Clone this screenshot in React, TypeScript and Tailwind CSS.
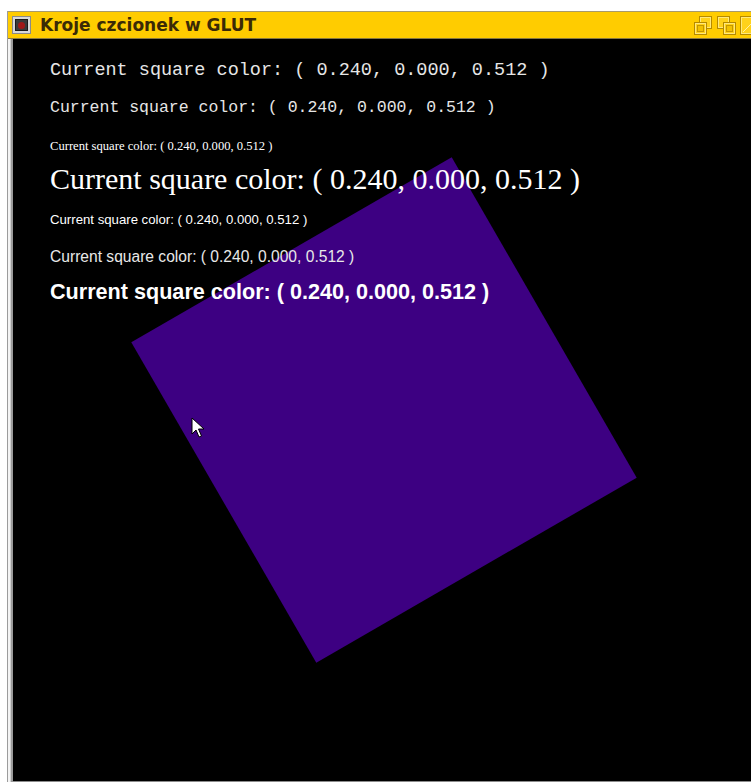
import React from "react";

const LINE = "Current square color: ( 0.240, 0.000, 0.512 )";

// little window-menu icon at the left end of the title bar
function MenuIcon() {
  return (
    <div className="w-[19px] h-[18px] bg-[#d8d8d8] border border-[#8a8a8a] flex items-center justify-center">
      <div className="w-[13px] h-[12px] bg-[#3a3a3a] border border-[#1a1a1a] flex items-center justify-center">
        <div className="w-[7px] h-[7px] rounded-full bg-[#a01818]" />
      </div>
    </div>
  );
}

function TitleButtons() {
  return (
    <div className="flex items-center gap-[4px] h-full mr-[-8px]">
      <svg width="19" height="19" viewBox="0 0 19 19">
        <rect x="5.5" y="0.5" width="12" height="12" fill="#ffd21a" stroke="#b48a00" />
        <rect x="6.5" y="1.5" width="10" height="10" fill="none" stroke="#ffe87a" />
        <rect x="0.5" y="6.5" width="12" height="12" fill="#ffd21a" stroke="#b48a00" />
        <rect x="1.5" y="7.5" width="10" height="10" fill="none" stroke="#ffe87a" />
        <rect x="3.5" y="9.5" width="6" height="6" fill="#f2c200" stroke="#c49600" />
      </svg>
      <svg width="19" height="19" viewBox="0 0 19 19">
        <rect x="0.5" y="0.5" width="12" height="12" fill="#ffd21a" stroke="#b48a00" />
        <rect x="1.5" y="1.5" width="10" height="10" fill="none" stroke="#ffe87a" />
        <rect x="6.5" y="6.5" width="12" height="12" fill="#ffd21a" stroke="#b48a00" />
        <rect x="7.5" y="7.5" width="10" height="10" fill="none" stroke="#ffe87a" />
        <rect x="9.5" y="9.5" width="6" height="6" fill="#f2c200" stroke="#c49600" />
      </svg>
      <svg width="19" height="19" viewBox="0 0 19 19">
        <rect x="0.5" y="0.5" width="18" height="18" fill="#ffd21a" stroke="#b48a00" />
        <rect x="1.5" y="1.5" width="16" height="16" fill="none" stroke="#ffe87a" />
        <path d="M3 16 L16 3" stroke="#fff0a0" strokeWidth="1" />
      </svg>
    </div>
  );
}

function Cursor() {
  return (
    <svg width="14" height="22" viewBox="0 0 14 22" className="absolute left-[178px] top-[378px]">
      <path
        d="M1 1 L1 17 L5 13 L8 20 L10.5 19 L7.5 12 L13 12 Z"
        fill="#ffffff"
        stroke="#000000"
        strokeWidth="1"
        strokeLinejoin="round"
      />
    </svg>
  );
}

export default function App() {
  return (
    <div className="w-[751px] h-[782px] bg-white overflow-hidden pt-[11px] pl-[7px]">
      <div className="h-full flex flex-col border-l border-[#9c9c9c]">
        {/* title bar */}
        <div className="h-[28px] shrink-0 bg-[#ffcc00] border-t border-[#a89a6a] border-b border-b-[#8a7a40] flex items-center pl-[4px] overflow-hidden">
          <MenuIcon />
          <span className="ml-[9px] text-[17px] font-bold text-[#3b2a06] font-['DejaVu_Sans',sans-serif] leading-none">
            Kroje czcionek w GLUT
          </span>
          <div className="ml-auto h-full flex items-center">
            <TitleButtons />
          </div>
        </div>

        <div className="flex-1 flex">
          {/* left frame bevel */}
          <div className="w-[5px] flex">
            <div className="w-[2px] bg-[#f4f4f4]" />
            <div className="w-[1px] bg-[#d0d0d0]" />
            <div className="w-[2px] bg-[#9a9a9a]" />
          </div>

          {/* GL drawing area */}
          <div className="flex-1 flex flex-col">
            <div className="relative flex-1 bg-black overflow-hidden pl-[37px] pt-[20px] text-white">
              <div className="absolute left-[186px] top-[186px] w-[370px] h-[370px] bg-[#3d0082] rotate-[60deg]" />

              <div className="relative flex flex-col">
                <div className="h-[24px] leading-[24px] text-[18.5px] font-['Liberation_Mono',monospace] text-[#e6e6e6] whitespace-pre">
                  {LINE}
                </div>
                <div className="mt-[13px] h-[24px] leading-[24px] text-[16.5px] font-['Liberation_Mono',monospace] text-[#e6e6e6] whitespace-pre">
                  {LINE}
                </div>
                <div className="mt-[14px] h-[24px] leading-[24px] text-[12.6px] font-['Liberation_Serif',serif] whitespace-pre">
                  {LINE}
                </div>
                <div className="mt-[4px] h-[34px] leading-[34px] text-[30px] font-['Liberation_Serif',serif] whitespace-pre">
                  {LINE}
                </div>
                <div className="mt-[12px] h-[24px] leading-[24px] text-[13.2px] font-['Liberation_Sans',sans-serif] whitespace-pre">
                  {LINE}
                </div>
                <div className="mt-[13px] h-[24px] leading-[24px] text-[15.6px] font-['Liberation_Sans',sans-serif] text-[#e8e8e8] whitespace-pre">
                  {LINE}
                </div>
                <div className="mt-[11px] h-[24px] leading-[24px] text-[21.6px] font-bold font-['Liberation_Sans',sans-serif] whitespace-pre">
                  {LINE}
                </div>
              </div>

              <Cursor />
            </div>
            <div className="h-[1px] bg-[#8c8c8c]" />
          </div>
        </div>
      </div>
    </div>
  );
}
